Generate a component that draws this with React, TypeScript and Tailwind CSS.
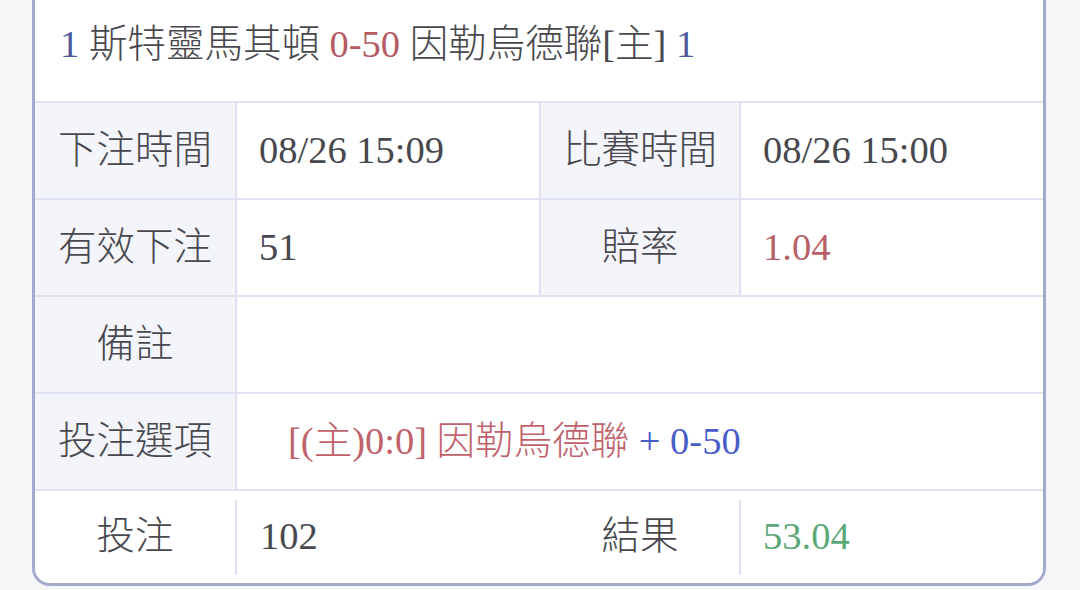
const font = { fontFamily: '"Liberation Serif", "Noto Sans CJK TC", serif' }

const Label = ({ text }: { text: string }) => (
  <div className="bg-[#f4f5fb] flex items-center justify-center">{text}</div>
)

const Value = ({ children, className = "" }: { children?: React.ReactNode; className?: string }) => (
  <div className={`bg-white flex items-center pl-[22px] ${className}`}>{children}</div>
)

export default function App() {
  return (
    <div
      className="w-[1080px] h-[590px] bg-[#f6f6f8] overflow-hidden pl-[32px] text-[38.5px] font-light text-[#48484e]"
      style={font}
    >
      <div className="w-[1014px] bg-white border-x-[3px] border-b-[3px] border-[#a4a9cf] rounded-b-[18px] overflow-hidden">
        {/* HEADER */}
        <div className="h-[101px] flex items-center pl-[25px] pb-[12px] whitespace-pre">
          <span className="text-[#4f5a9a]">1</span>
          <span> 斯特靈馬其頓 </span>
          <span className="text-[#b55a62]">0-50</span>
          <span> 因勒烏德聯[主] </span>
          <span className="text-[#4f5a9a]">1</span>
        </div>
        {/* TABLE */}
        <div className="flex flex-col gap-[2px] bg-[#dfe1f0] pt-[2px]">
          <div className="grid grid-cols-[200px_302px_198px_1fr] gap-[2px] h-[95px]">
            <Label text="下注時間" />
            <Value>08/26 15:09</Value>
            <Label text="比賽時間" />
            <Value>08/26 15:00</Value>
          </div>
          <div className="grid grid-cols-[200px_302px_198px_1fr] gap-[2px] h-[95px]">
            <Label text="有效下注" />
            <Value>51</Value>
            <Label text="賠率" />
            <Value className="text-[#b85f68]">1.04</Value>
          </div>
          <div className="grid grid-cols-[200px_1fr] gap-[2px] h-[95px]">
            <Label text="備註" />
            <Value />
          </div>
          <div className="grid grid-cols-[200px_1fr] gap-[2px] h-[95px]">
            <Label text="投注選項" />
            <Value className="pl-[51px] whitespace-pre">
              <span className="text-[#c0616b]">[(主)0:0] 因勒烏德聯</span>
              <span className="text-[#4a5cc9]"> + 0-50</span>
            </Value>
          </div>
          {/* LAST ROW */}
          <div className="grid grid-cols-[200px_2px_304px_198px_2px_1fr] h-[92px] bg-white">
            <div className="flex items-center justify-center">投注</div>
            <div className="self-center h-[75px] bg-[#dfe1f0]" />
            <div className="flex items-center pl-[23px]">102</div>
            <div className="flex items-center justify-center">結果</div>
            <div className="self-center h-[75px] bg-[#dfe1f0]" />
            <div className="flex items-center pl-[22px] text-[#5aa877]">53.04</div>
          </div>
        </div>
      </div>
    </div>
  )
}
